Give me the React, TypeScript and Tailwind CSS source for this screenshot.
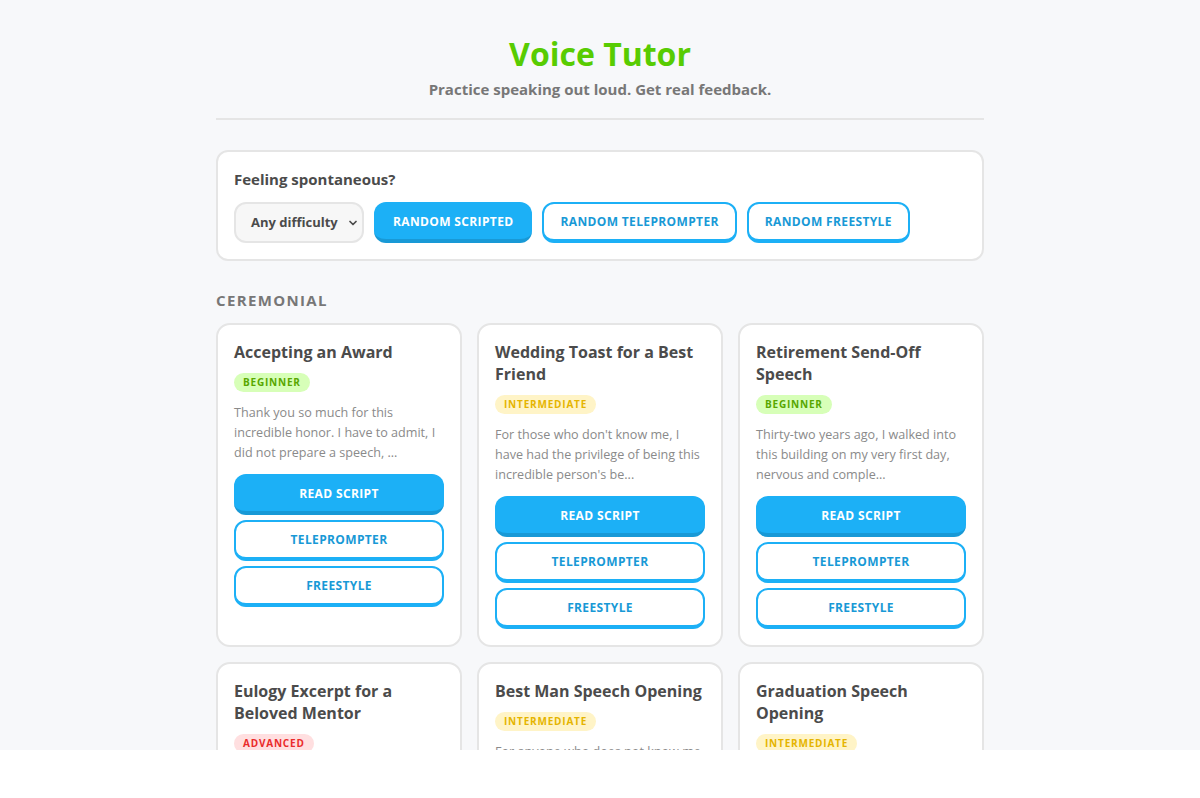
import { ChevronDown } from 'lucide-react'

type Level = 'beginner' | 'intermediate' | 'advanced'

type Speech = {
  title: string
  level: Level
  snippet: string
}

const speeches: Speech[] = [
  {
    title: 'Accepting an Award',
    level: 'beginner',
    snippet: 'Thank you so much for this incredible honor. I have to admit, I did not prepare a speech, ...',
  },
  {
    title: 'Wedding Toast for a Best Friend',
    level: 'intermediate',
    snippet: "For those who don't know me, I have had the privilege of being this incredible person's be...",
  },
  {
    title: 'Retirement Send-Off Speech',
    level: 'beginner',
    snippet: 'Thirty-two years ago, I walked into this building on my very first day, nervous and comple...',
  },
  {
    title: 'Eulogy Excerpt for a Beloved Mentor',
    level: 'advanced',
    snippet: 'There are people who pass through our lives and leave them exactly as they found them...',
  },
  {
    title: 'Best Man Speech Opening',
    level: 'intermediate',
    snippet: 'For anyone who does not know me, I am the groom’s oldest friend and, apparently, the...',
  },
  {
    title: 'Graduation Speech Opening',
    level: 'intermediate',
    snippet: 'Good morning, graduates, families, faculty, and friends. Four years ago we arrived...',
  },
]

const badgeStyles: Record<Level, string> = {
  beginner: 'bg-[#d7ffb8] text-[#58a700]',
  intermediate: 'bg-[#fff4c7] text-[#e5b400]',
  advanced: 'bg-[#ffdfe0] text-[#ea2b2b]',
}

function Badge({ level }: { level: Level }) {
  return (
    <span
      className={`inline-flex h-[19px] items-center rounded-full px-[9px] text-[10px] font-bold uppercase tracking-[0.08em] ${badgeStyles[level]}`}
    >
      {level}
    </span>
  )
}

function SolidButton({ children, className = '' }: { children: React.ReactNode; className?: string }) {
  return (
    <button
      className={`h-[41px] rounded-xl border-b-4 border-[#1899d6] bg-[#1cb0f6] px-[19px] pt-[2px] text-[12px] font-bold uppercase tracking-[0.03em] text-white ${className}`}
    >
      {children}
    </button>
  )
}

function OutlineButton({ children, className = '' }: { children: React.ReactNode; className?: string }) {
  return (
    <button
      className={`h-[41px] rounded-xl border-2 border-b-4 border-[#1cb0f6] bg-white px-[16px] text-[12px] font-bold uppercase tracking-[0.03em] text-[#1899d6] ${className}`}
    >
      {children}
    </button>
  )
}

function SpeechCard({ speech }: { speech: Speech }) {
  return (
    <div className="flex flex-col rounded-[14px] border-2 border-[#e5e5e5] bg-white p-4">
      <h3 className="text-[16px] font-bold leading-[22px] text-[#4b4b4b]">{speech.title}</h3>
      <div className="mt-[10px] flex">
        <Badge level={speech.level} />
      </div>
      <p className="mt-[11px] text-[12.6px] leading-[20px] text-[#8a8a8a]">{speech.snippet}</p>
      <div className="mt-[11px] flex flex-col gap-[5px]">
        <SolidButton>Read Script</SolidButton>
        <OutlineButton>Teleprompter</OutlineButton>
        <OutlineButton>Freestyle</OutlineButton>
      </div>
    </div>
  )
}

export default function App() {
  return (
    <div
      className="h-[750px] overflow-hidden bg-[#f7f8fa]"
      style={{ fontFamily: '"Open Sans", "Noto Sans", sans-serif' }}
    >
      <div className="mx-auto max-w-3xl">
        <header className="border-b-2 border-[#e5e5e5] pb-[19px] pt-[33px] text-center">
          <h1 className="text-[32px] font-bold leading-[42px] text-[#58cc02]">Voice Tutor</h1>
          <p className="mt-[4px] text-[15px] font-bold leading-[20px] text-[#777777]">
            Practice speaking out loud. Get real feedback.
          </p>
        </header>

        <section className="mt-[30px] rounded-xl border-2 border-[#e5e5e5] bg-white px-4 pb-4 pt-[17px]">
          <p className="text-[15px] font-bold leading-[20px] text-[#4b4b4b]">Feeling spontaneous?</p>
          <div className="mt-[13px] flex items-center gap-[10px]">
            <div className="flex h-[41px] w-[130px] items-center justify-between rounded-xl border-2 border-[#e5e5e5] bg-[#f7f7f7] pl-[15px] pr-[3px] text-[13px] font-bold text-[#4b4b4b]">
              <span>Any difficulty</span>
              <ChevronDown size={12} strokeWidth={3.5} />
            </div>
            <SolidButton>Random Scripted</SolidButton>
            <OutlineButton>Random Teleprompter</OutlineButton>
            <OutlineButton>Random Freestyle</OutlineButton>
          </div>
        </section>

        <h2 className="mt-[29px] text-[15px] font-bold uppercase leading-[20px] tracking-[0.09em] text-[#777777]">
          Ceremonial
        </h2>
        <div className="mt-[13px] grid grid-cols-3 gap-[15px]">
          {speeches.map((s) => (
            <SpeechCard key={s.title} speech={s} />
          ))}
        </div>
      </div>
    </div>
  )
}
